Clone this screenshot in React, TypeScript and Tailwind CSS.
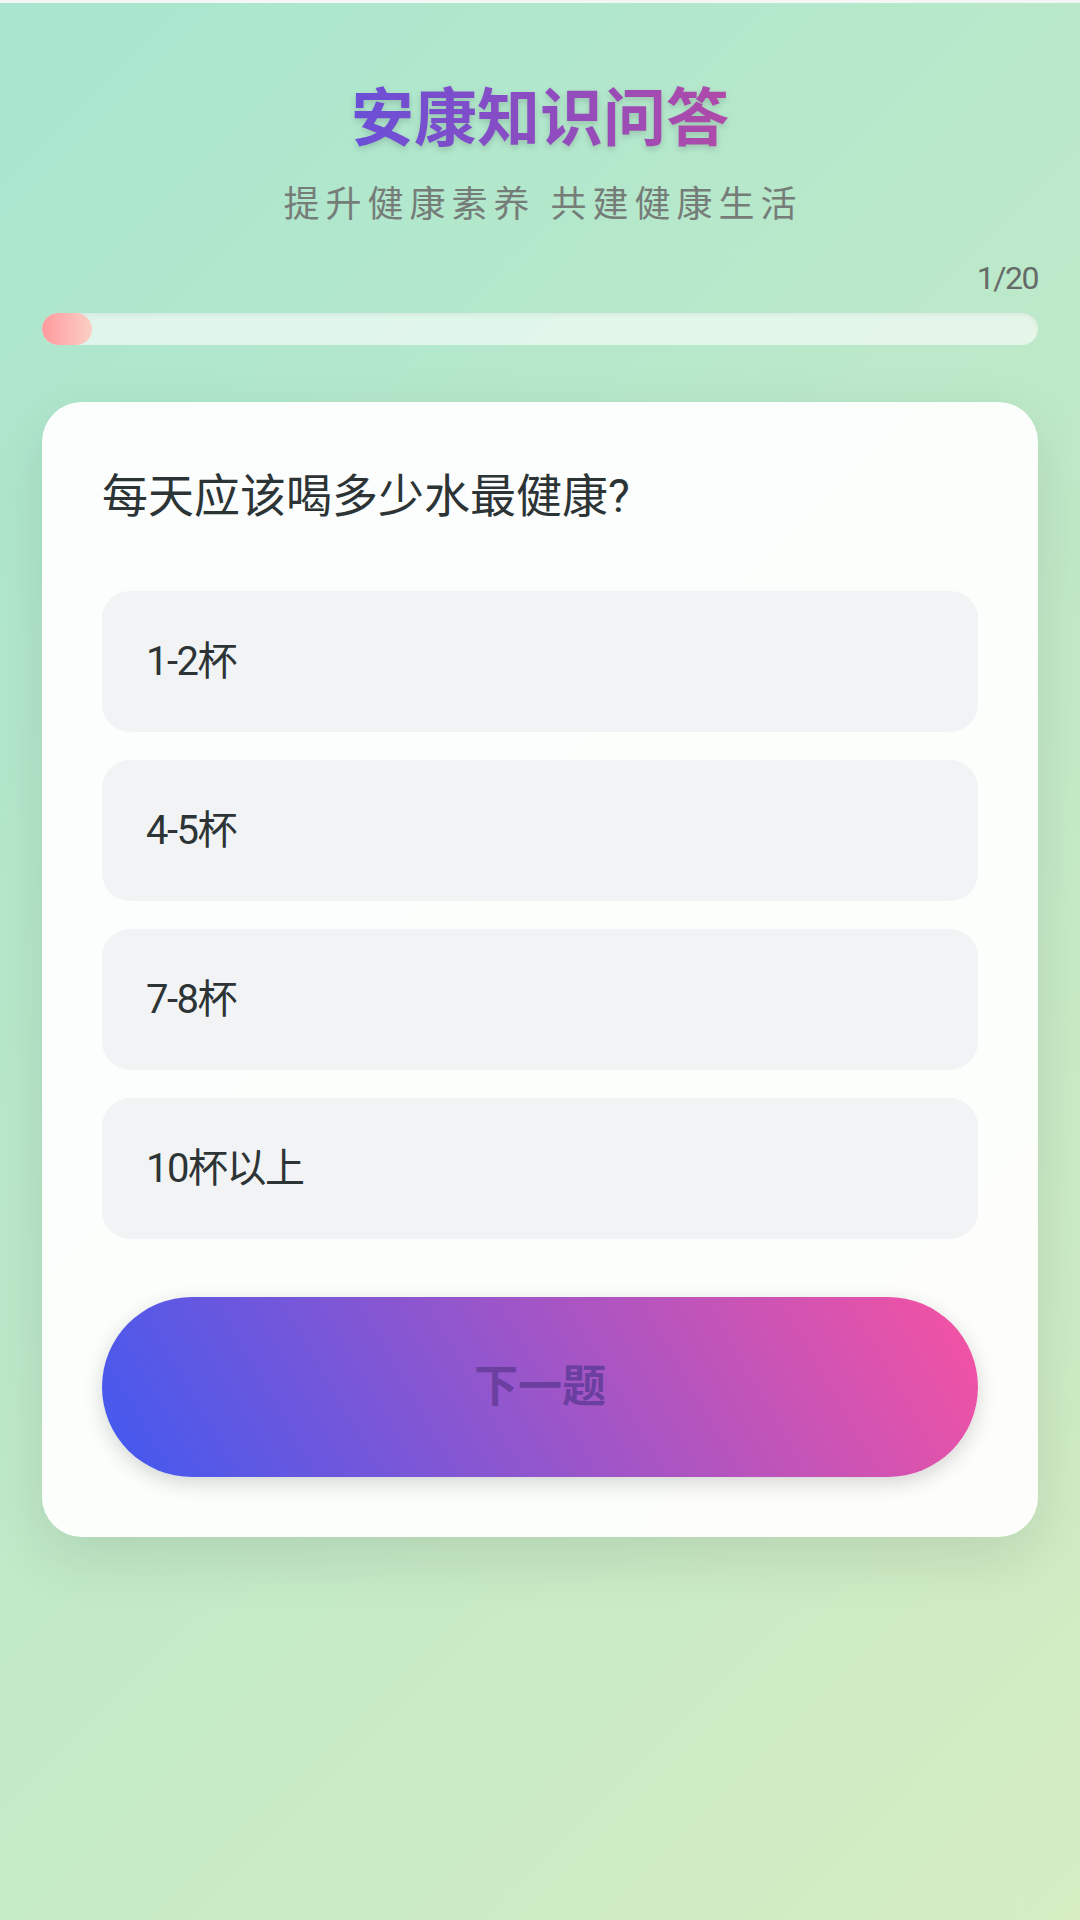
const options = ["1-2杯", "4-5杯", "7-8杯", "10杯以上"]

export default function App() {
    const current = 1
    const total = 20
    const progress = (current / total) * 100

    return (
        <div className="min-h-[1920px] w-full bg-[linear-gradient(135deg,#a8e6cf_0%,#d6edc2_100%)] font-['Roboto','Noto_Sans_CJK_SC',sans-serif]">
            {/* 顶部细条 */}
            <div className="h-[3px] bg-[#f3f6f4]" />

            <div className="px-[42px] pt-[72px]">
                {/* 标题 */}
                <div className="flex flex-col items-center">
                    <h1 className="text-[63px] leading-[88px] font-bold bg-[linear-gradient(90deg,#6a4fd8,#b04aa8)] bg-clip-text text-transparent drop-shadow-[0_3px_3px_rgba(0,0,0,0.15)]">
                        安康知识问答
                    </h1>
                    <p className="mt-[17px] pl-[6px] text-[36px] leading-[50px] tracking-[6px] text-[#767d79]">
                        提升健康素养 共建健康生活
                    </p>
                </div>

                {/* 进度 */}
                <div className="mt-[26px] text-right text-[32px] leading-[45px] tracking-[-1.5px] text-[#666b69]">
                    {current}/{total}
                </div>
                <div className="mt-[12px] h-[32px] w-full rounded-full bg-white/60 shadow-[inset_0_2px_4px_rgba(0,0,0,0.05)] overflow-hidden">
                    <div
                        className="h-full rounded-full bg-[linear-gradient(90deg,#ff9a9e,#fad0c4)]"
                        style={{ width: `${progress}%` }}
                    />
                </div>

                {/* 题目卡片 */}
                <div className="mt-[57px] rounded-[40px] bg-white/95 p-[60px] shadow-[0_20px_60px_rgba(0,0,0,0.1)]">
                    <div className="text-[46px] leading-[69px] text-[#2d3436]">每天应该喝多少水最健康?</div>

                    <div className="mt-[60px] flex flex-col gap-[28px]">
                        {options.map((opt) => (
                            <div
                                key={opt}
                                className="h-[141px] flex items-center rounded-[28px] bg-[#f2f3f5] px-[44px] text-[40px] tracking-[-1.5px] text-[#2d3436]"
                            >
                                {opt}
                            </div>
                        ))}
                    </div>

                    <button className="mt-[58px] w-full h-[180px] rounded-full bg-[linear-gradient(60deg,#4059f0,#f652a2)] shadow-[0_6px_20px_rgba(0,0,0,0.16)] text-[44px] font-bold text-[#6b3fa0]">
                        下一题
                    </button>
                </div>
            </div>
        </div>
    )
}
